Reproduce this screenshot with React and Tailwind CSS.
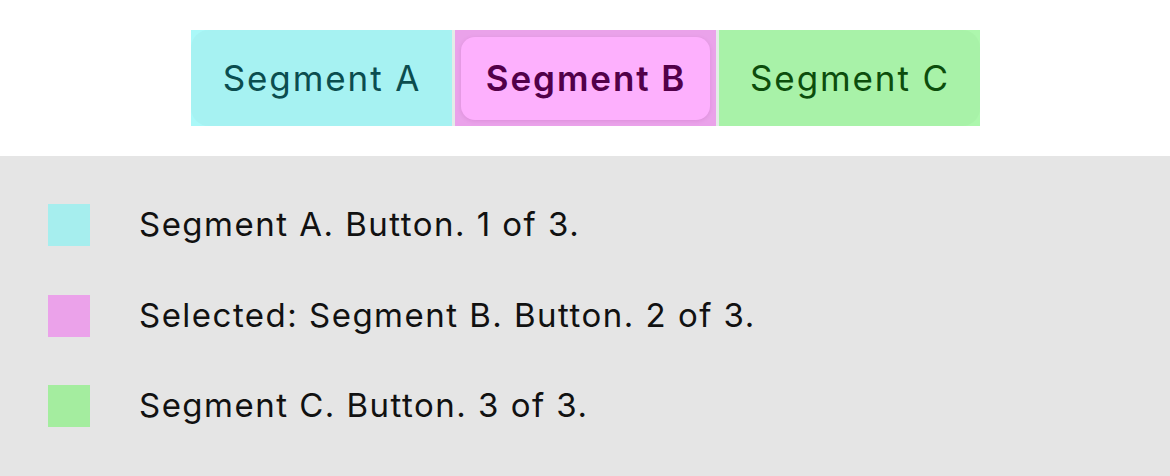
const segments = [
  { label: "Segment A", outer: "bg-[#aaf8f8]", inner: "bg-[#a6f2f2]", text: "text-[#0b4d4f]" },
  { label: "Segment B", outer: "bg-[#eaa2ea]", inner: "bg-[#fdb0fd]", text: "text-[#520049]", selected: true },
  { label: "Segment C", outer: "bg-[#adf7ad]", inner: "bg-[#a8f2a8]", text: "text-[#0c4d0c]" },
];

const legend = [
  { color: "bg-[#a6eeee]", text: "Segment A. Button. 1 of 3." },
  { color: "bg-[#eba2ea]", text: "Selected: Segment B. Button. 2 of 3." },
  { color: "bg-[#a4ed9f]", text: "Segment C. Button. 3 of 3." },
];

export default function App() {
  return (
    <div className="w-[1170px] h-[476px] bg-white flex flex-col" style={{ fontFamily: "Inter, 'Noto Sans', sans-serif" }}>
      {/* segmented control */}
      <div className="h-[156px] flex justify-center pt-[30px]">
        <div className="flex h-[96px]">
          <div className={`w-[261px] ${segments[0].outer}`}>
            <div className={`h-full rounded-l-[18px] flex items-center justify-center ${segments[0].inner}`}>
              <span className={`text-[35px] tracking-[1.9px] pl-[2px] ${segments[0].text}`}>Segment A</span>
            </div>
          </div>
          <div className="w-[3px] bg-[#e4ebe8]" />
          <div className={`w-[261px] ${segments[1].outer} p-[6px] pt-[7px]`}>
            <div className={`h-full rounded-[14px] flex items-center justify-center shadow-[0_1px_4px_rgba(120,0,110,0.12)] ${segments[1].inner}`}>
              <span className={`text-[35px] font-semibold tracking-[1.9px] pl-[2px] ${segments[1].text}`}>Segment B</span>
            </div>
          </div>
          <div className="w-[3px] bg-[#e4ebe8]" />
          <div className={`w-[261px] ${segments[2].outer}`}>
            <div className={`h-full rounded-r-[18px] flex items-center justify-center ${segments[2].inner}`}>
              <span className={`text-[35px] tracking-[1.9px] pl-[2px] ${segments[2].text}`}>Segment C</span>
            </div>
          </div>
        </div>
      </div>

      {/* accessibility legend */}
      <div className="flex-1 bg-[#e5e5e5] pt-[48px] pl-[48px] flex flex-col gap-[48.5px]">
        {legend.map((row) => (
          <div key={row.text} className="flex items-center h-[42px]">
            <div className={`w-[42px] h-[42px] ${row.color}`} />
            <span className="ml-[49px] text-[33px] text-[#111] tracking-[1.48px]">{row.text}</span>
          </div>
        ))}
      </div>
    </div>
  );
}
